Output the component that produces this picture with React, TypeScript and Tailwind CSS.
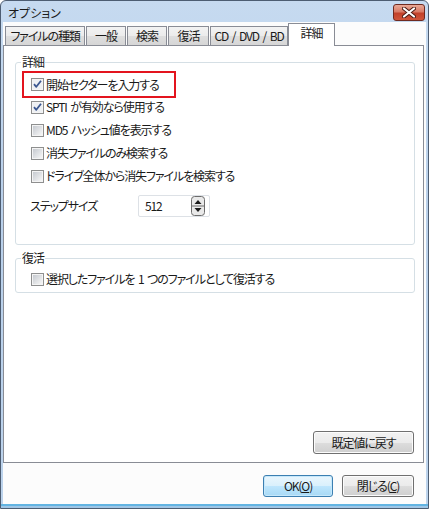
import React from "react";

const font =
  "font-['Noto_Sans_CJK_JP','Noto_Sans',sans-serif] [font-feature-settings:'palt'] text-[12px] leading-[14px] tracking-[-1.1px] [word-spacing:2px] text-[#1a1a1a]";

function Box({ checked }: { checked?: boolean }) {
  return (
    <svg width="13" height="13" viewBox="0 0 13 13" className="shrink-0">
      <defs>
        <linearGradient id="cbg" x1="0" y1="0" x2="1" y2="1">
          <stop offset="0" stopColor="#c6cad0" />
          <stop offset="1" stopColor="#f6f6f6" />
        </linearGradient>
      </defs>
      <rect x="0.5" y="0.5" width="12" height="12" fill="#f4f4f4" stroke="#8e8f8f" />
      <rect x="2" y="2" width="9" height="9" fill={checked ? "#eef0f3" : "url(#cbg)"} />
      {checked && (
        <path
          d="M3 6.2 L5.3 8.8 L10 2.8"
          stroke="#3b5790"
          strokeWidth="1.8"
          fill="none"
          strokeLinejoin="round"
        />
      )}
    </svg>
  );
}

function Row({ label, checked, className = "" }: { label: string; checked?: boolean; className?: string }) {
  return (
    <div className={`flex h-[16px] items-center gap-[2px] ${className}`}>
      <Box checked={checked} />
      <span className="whitespace-nowrap">{label}</span>
    </div>
  );
}

function Btn({ children, primary, className = "" }: { children: React.ReactNode; primary?: boolean; className?: string }) {
  return (
    <button
      className={`flex items-center justify-center rounded-[3px] border ${
        primary
          ? "border-[#3c7fb1] bg-[linear-gradient(180deg,#eaf6fd_0%,#d9f0fc_50%,#bee6fd_51%,#a7d9f5_100%)] shadow-[inset_0_0_0_1px_#c6e8fb]"
          : "border-[#707070] bg-[linear-gradient(180deg,#f2f2f2_0%,#ebebeb_50%,#dddddd_51%,#cfcfcf_100%)] shadow-[inset_0_0_0_1px_#fcfcfc]"
      } ${className}`}
    >
      {children}
    </button>
  );
}

function Spinner() {
  return (
    <svg width="14" height="20" viewBox="0 0 14 20">
      <rect x="0.5" y="0.5" width="13" height="19" rx="3" fill="#e9e9e9" stroke="#6c6c6c" />
      <line x1="1" y1="10" x2="13" y2="10" stroke="#6c6c6c" />
      <path d="M3.5 8 L7 4 L10.5 8 Z" fill="#1a1a1a" />
      <path d="M3.5 12 L7 16 L10.5 12 Z" fill="#1a1a1a" />
    </svg>
  );
}

export default function App() {
  const tabs = [
    { t: "ファイルの種類", w: "w-[80px]" },
    { t: "一般", w: "w-[40px]" },
    { t: "検索", w: "w-[40px]" },
    { t: "復活", w: "w-[41px]" },
    { t: "CD / DVD / BD", w: "w-[78px]" },
  ];
  return (
    <div className={`${font} flex h-[509px] w-[429px] flex-col rounded-t-[6px] border border-[#4d5d72] bg-[linear-gradient(180deg,#c6daf0_0%,#b9d0ea_40%,#bcd3ec_100%)]`}>
      {/* title bar */}
      <div className="flex h-[21px] items-start justify-between pl-[7px] pr-[3px]">
        <span className="mt-[5px] text-[12px] tracking-[0px] text-[#1a1a1a]">オプション</span>
        <div className="mt-[3px] flex h-[17px] w-[32px] items-center justify-center rounded-[3px] border border-[#6e2a20] bg-[linear-gradient(180deg,#e9a997_0%,#d97b66_45%,#c2412a_55%,#d0553a_100%)]">
          <svg width="14" height="11" viewBox="0 0 14 11">
            <path d="M2 1.5 L12 9.5 M12 1.5 L2 9.5" stroke="#4a1a12" strokeWidth="4" strokeLinecap="round" />
            <path d="M2 1.5 L12 9.5 M12 1.5 L2 9.5" stroke="#ffffff" strokeWidth="2.2" strokeLinecap="round" />
          </svg>
        </div>
      </div>

      {/* client */}
      <div className="mx-[2px] flex flex-1 flex-col bg-[#fcfcfc]">
        {/* tabs */}
        <div className="flex h-[23px] items-end pl-[2px]">
          {tabs.map((tab, i) => (
            <div
              key={tab.t}
              className={`flex h-[19px] items-center justify-center whitespace-nowrap border border-b-0 border-[#898c95] bg-[linear-gradient(180deg,#f3f3f3_0%,#ebebeb_50%,#dedede_51%,#d6d6d6_100%)] ${tab.w} ${i > 0 ? "ml-[1px]" : ""}`}
            >
              {tab.t}
            </div>
          ))}
          <div className="relative z-10 -mb-[1px] flex h-[23px] w-[47px] items-start justify-center border border-b-0 border-[#898c95] bg-white pt-[2px]">
            詳細
          </div>
        </div>

        {/* panel */}
        <div className="flex h-[418px] w-[421px] flex-col border border-[#898c95] bg-white">
          <fieldset className="ml-[11px] mt-[9px] w-[400px] rounded-[3px] border border-[#d5dfe5] pb-[27px]">
            <legend className="ml-[5px] px-[1px]">詳細</legend>
            <div className="ml-[6px] mt-[2px] flex h-[27px] w-[154px] items-center border-2 border-[#e3141e] pl-[7px]">
              <Row label="開始セクターを入力する" checked />
            </div>
            <Row label="SPTI が有効なら使用する" checked className="ml-[15px] mt-[1px]" />
            <Row label="MD5 ハッシュ値を表示する" className="ml-[15px] mt-[7px]" />
            <Row label="消失ファイルのみ検索する" className="ml-[15px] mt-[7px]" />
            <Row label="ドライブ全体から消失ファイルを検索する" className="ml-[15px] mt-[7px]" />
            <div className="ml-[14px] mt-[11px] flex h-[22px] items-center">
              <span className="w-[108px]">ステップサイズ</span>
              <div className="flex h-[22px] w-[72px] items-center justify-between rounded-[2px] border border-[#dde1e6] pl-[6px] pr-[4px]">
                <span>512</span>
                <Spinner />
              </div>
            </div>
          </fieldset>

          <fieldset className="ml-[11px] mt-[6px] w-[400px] rounded-[3px] border border-[#d5dfe5] pb-[5px]">
            <legend className="ml-[5px] px-[1px]">復活</legend>
            <Row label="選択したファイルを 1 つのファイルとして復活する" className="ml-[15px] mt-[6px]" />
          </fieldset>

          <div className="mt-auto mb-[8px] mr-[9px] flex justify-end">
            <Btn className="h-[23px] w-[101px]">既定値に戻す</Btn>
          </div>
        </div>

        {/* dialog buttons */}
        <div className="mt-[12px] flex justify-end gap-[9px] pr-[12px]">
          <Btn primary className="h-[22px] w-[70px]">
            OK(<span className="underline">O</span>)
          </Btn>
          <Btn className="h-[22px] w-[72px]">
            閉じる(<span className="underline">C</span>)
          </Btn>
        </div>
      </div>
      <div className="h-[2px] bg-[#62b4e2]" />
      <div className="h-[2px] bg-[#9fc6e6]" />
    </div>
  );
}
